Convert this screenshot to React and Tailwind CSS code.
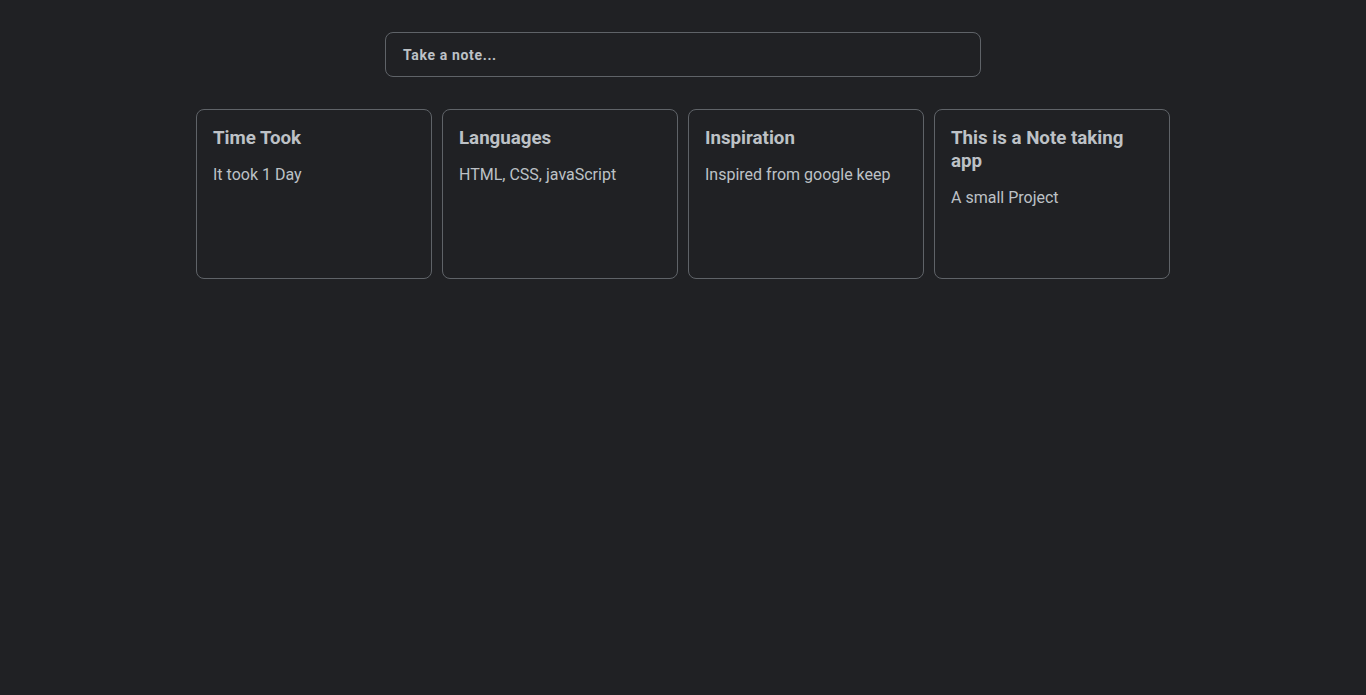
import React from "react";

const notes = [
  { title: "Time Took", body: "It took 1 Day" },
  { title: "Languages", body: "HTML, CSS, javaScript" },
  { title: "Inspiration", body: "Inspired from google keep" },
  { title: "This is a Note taking app", body: "A small Project" },
];

export default function App() {
  return (
    <div
      className="min-h-[695px] w-full bg-[#202124] text-[#bdc1c6]"
      style={{ fontFamily: "Roboto, 'Liberation Sans', sans-serif" }}
    >
      <div className="flex justify-center pt-[32px]">
        <div className="w-[596px] h-[45px] rounded-lg border border-[#5f6368] flex items-center px-[17px] pt-[2px]">
          <span className="text-[14px] font-bold tracking-[0.65px] text-[#bdc1c6]">Take a note...</span>
        </div>
      </div>
      <div className="flex justify-center gap-[10px] mt-[32px]">
        {notes.map((n) => (
          <div
            key={n.title}
            className="w-[236px] h-[170px] rounded-lg border border-[#5f6368] px-[16px] pt-[17px]"
          >
            <div className="text-[18.72px] font-bold leading-[23px] text-[#bdc1c6]">{n.title}</div>
            <div className="text-[16px] leading-[20px] mt-[15px] text-[#bdc1c6]">{n.body}</div>
          </div>
        ))}
      </div>
    </div>
  );
}
